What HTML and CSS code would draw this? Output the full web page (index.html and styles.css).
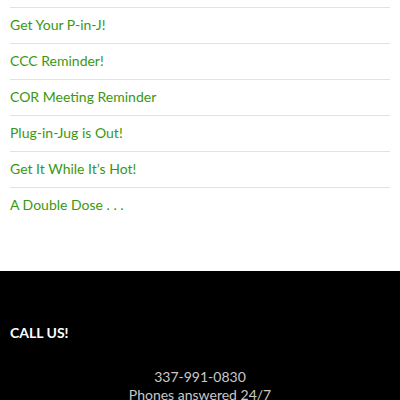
FILE: index.html
```html
<!DOCTYPE html>
<html>
<head>
<meta charset="utf-8">
<link rel="stylesheet" href="styles.css">
</head>
<body>
<div class="widget">
  <ul class="posts">
    <li><a href="#">Get Your P-in-J!</a></li>
    <li><a href="#">CCC Reminder!</a></li>
    <li><a href="#">COR Meeting Reminder</a></li>
    <li><a href="#">Plug-in-Jug is Out!</a></li>
    <li><a href="#">Get It While It’s Hot!</a></li>
    <li><a href="#">A Double Dose . . .</a></li>
  </ul>
</div>
<footer class="footer">
  <h3 class="footer-title">CALL US!</h3>
  <div class="contact">
    <div>337-991-0830</div>
    <div>Phones answered 24/7</div>
  </div>
</footer>
</body>
</html>
```
FILE: styles.css
```css
html, body {
  margin: 0;
  padding: 0;
  background: #fff;
  font-family: Lato, "Open Sans", sans-serif;
  font-size: 14px;
}
.widget {
  padding: 7px 10px 0;
  height: 271px;
  box-sizing: border-box;
}
.posts {
  list-style: none;
  margin: 0;
  padding: 0;
}
.posts li {
  border-top: 1px solid #e3e3e3;
  padding: 7px 0 8px;
  line-height: 20px;
}
.posts a {
  color: #3a9810;
  text-decoration: none;
}
.footer {
  background: #000;
  height: 129px;
  padding: 52px 10px 0;
  box-sizing: border-box;
  overflow: hidden;
}
.footer-title {
  margin: 0;
  color: #fff;
  font-size: 14px;
  font-weight: 700;
  line-height: 20px;
}
.contact {
  margin-top: 25px;
  text-align: center;
  color: #c8c8c8;
  font-size: 14px;
  line-height: 18px;
}
```
